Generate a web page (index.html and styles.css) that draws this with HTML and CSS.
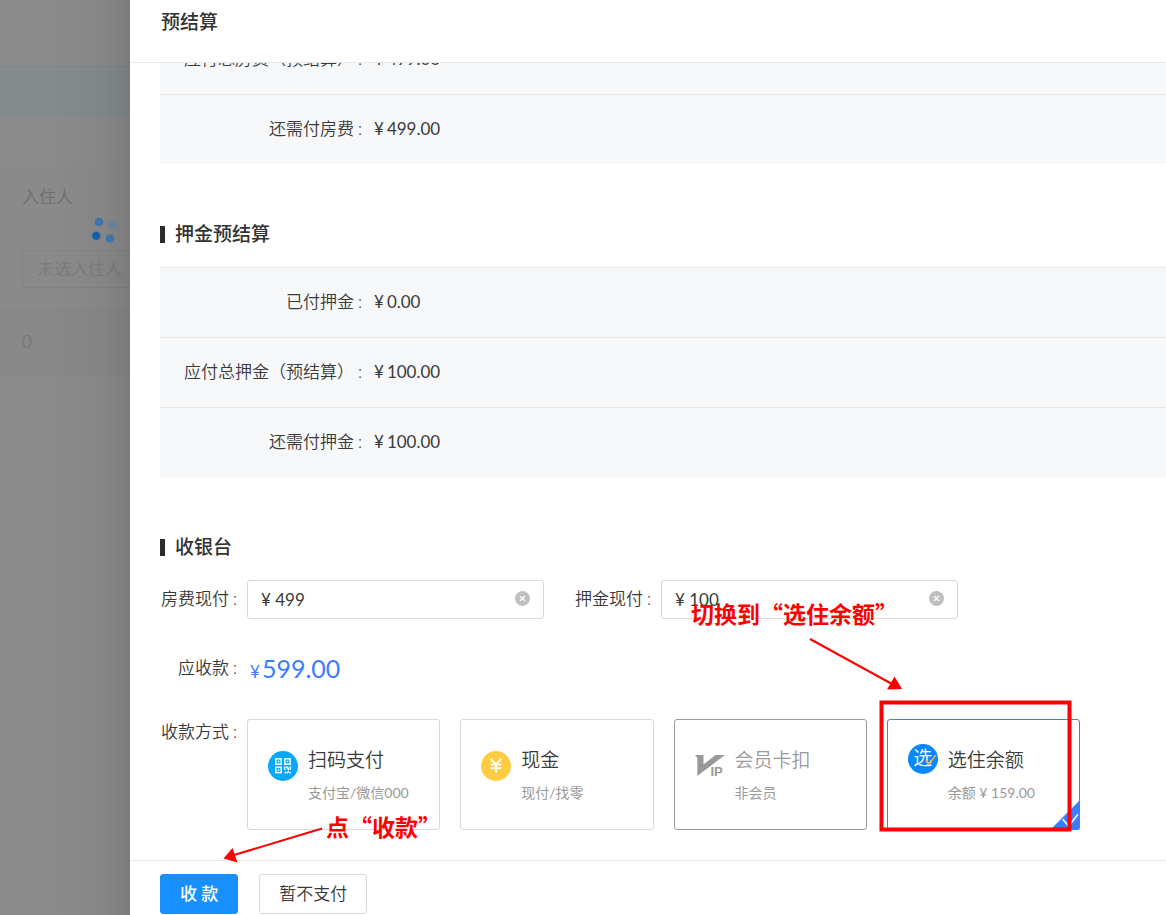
FILE: index.html
```html
<!DOCTYPE html>
<html lang="zh-CN">
<head>
<meta charset="utf-8">
<title>预结算</title>
<link rel="stylesheet" href="styles.css">
</head>
<body>
<div class="app">
  <aside class="backdrop">
    <div class="bg-top"></div>
    <div class="bg-alert"></div>
    <div class="bg-space"></div>
    <div class="bg-guest">
      <div class="bg-title">入住人</div>
      <div class="bg-field">未选入住人</div>
    </div>
    <div class="bg-total">0</div>
    <svg class="spinner" width="28" height="28" viewBox="0 0 28 28" aria-hidden="true">
      <circle cx="8" cy="7" r="4.3" fill="#3f73ab"/>
      <circle cx="21.7" cy="9.8" r="4.3" fill="#6681a0"/>
      <circle cx="5.2" cy="20.8" r="4.3" fill="#195fa8"/>
      <circle cx="19" cy="23.5" r="4.3" fill="#3f71a6"/>
    </svg>
  </aside>

  <main class="drawer">
    <header class="drawer-head"><h1>预结算</h1></header>

    <div class="drawer-body">
      <dl class="sheet">
        <div class="row"><dt>应付总房费（预结算）<i>:</i></dt><dd><i>¥</i>499.00</dd></div>
        <div class="row"><dt>还需付房费<i>:</i></dt><dd><i>¥</i>499.00</dd></div>
      </dl>

      <h2>押金预结算</h2>
      <dl class="sheet">
        <div class="row"><dt>已付押金<i>:</i></dt><dd><i>¥</i>0.00</dd></div>
        <div class="row"><dt>应付总押金（预结算）<i>:</i></dt><dd><i>¥</i>100.00</dd></div>
        <div class="row"><dt>还需付押金<i>:</i></dt><dd><i>¥</i>100.00</dd></div>
      </dl>

      <h2>收银台</h2>
      <form class="cashier" id="cashier">
        <div class="line">
          <label class="name" for="room">房费现付<i>:</i></label>
          <div class="field">
            <input id="room" type="text" value="¥ 499">
            <button type="button" class="clear" aria-label="清除房费">
              <svg width="15" height="15" viewBox="0 0 15 15"><circle cx="7.5" cy="7.5" r="7.5" fill="#bfbfbf"/><path d="M5 5l5 5M10 5l-5 5" stroke="#fff" stroke-width="1.2"/></svg>
            </button>
          </div>
          <label class="name second" for="deposit">押金现付<i>:</i></label>
          <div class="field">
            <input id="deposit" type="text" value="¥ 100">
            <button type="button" class="clear" aria-label="清除押金">
              <svg width="15" height="15" viewBox="0 0 15 15"><circle cx="7.5" cy="7.5" r="7.5" fill="#bfbfbf"/><path d="M5 5l5 5M10 5l-5 5" stroke="#fff" stroke-width="1.2"/></svg>
            </button>
          </div>
        </div>

        <div class="line due">
          <span class="name">应收款<i>:</i></span>
          <output class="sum"><small>¥</small>599.00</output>
        </div>

        <div class="line methods">
          <span class="name">收款方式<i>:</i></span>
          <div class="cards">
            <label class="card">
              <input type="radio" name="pay">
              <svg class="mark" width="30" height="30" viewBox="0 0 30 30" aria-hidden="true">
                <circle cx="15" cy="15" r="15" fill="#06a7fe"/>
                <g fill="none" stroke="#fff" stroke-width="1.5">
                  <rect x="7.8" y="7.8" width="5.4" height="5.4"/><rect x="16.8" y="7.8" width="5.4" height="5.4"/><rect x="7.8" y="16.2" width="5.4" height="5.4"/>
                  <path d="M16.8 15.500v3.500M16.500 21.500h2M18 16.300h1.500l1.200 3M22.300 15.500v3.200M19 22.300l1.800-2"/>
                </g>
                <path d="M9.8 9.8h1.5v1.5H9.8zM18.8 9.8h1.5v1.5h-1.5zM9.8 18.2h1.5v1.5H9.8zM21.5 21h1.5v1.5h-1.5z" fill="#fff"/>
              </svg>
              <span class="info"><b>扫码支付</b><em>支付宝/微信000</em></span>
            </label>
            <label class="card">
              <input type="radio" name="pay">
              <svg class="mark" width="30" height="30" viewBox="0 0 30 30" aria-hidden="true">
                <circle cx="15" cy="15" r="15" fill="#ffcb41"/>
                <path d="M9.8 8l5.2 5.3L20.2 8M9.5 13.6h11M9.5 17.2h11M15 13.3v8.5" fill="none" stroke="#fff" stroke-width="1.8"/>
              </svg>
              <span class="info"><b>现金</b><em>现付/找零</em></span>
            </label>
            <label class="card off">
              <input type="radio" name="pay" disabled>
              <svg class="mark" width="30" height="30" viewBox="0 0 30 30" aria-hidden="true">
                <path d="M0 4h8.500v9.500L20.500 4H30L2.300 25V6.700z" fill="#999"/>
                <text class="vip" x="15.500" y="25">IP</text>
              </svg>
              <span class="info"><b>会员卡扣</b><em>非会员</em></span>
            </label>
            <label class="card on">
              <input type="radio" name="pay" checked>
              <span class="mark badge">选<svg width="12" height="12" viewBox="0 0 12 12" aria-hidden="true"><path d="M1 6l3 4L11 1" fill="none" stroke="#e5b53d" stroke-width="1.6"/></svg></span>
              <span class="info"><b>选住余额</b><em>余额 ¥ 159.00</em></span>
              <svg class="corner" width="30" height="30" viewBox="0 0 30 30" aria-hidden="true"><path d="M30 0v27a3 3 0 0 1-3 3H0z" fill="#3d7bff"/><path d="M12.700 19.300l6 6.700L28 14.300" fill="none" stroke="#fff" stroke-width="1.500"/></svg>
            </label>
          </div>
        </div>
      </form>
    </div>

    <footer class="drawer-foot">
      <button class="btn primary" type="submit" form="cashier">收 款</button>
      <button class="btn" type="button">暂不支付</button>
    </footer>
  </main>

  <div class="notes">
    <svg class="arrows" width="1166" height="915" viewBox="0 0 1166 915" aria-hidden="true">
      <rect x="881.5" y="702.5" width="188" height="127" fill="none" stroke="#f00" stroke-width="4"/>
      <path d="M810 639L892 684M322 828.500L234 855" stroke="#f00" stroke-width="2" fill="none"/>
      <path d="M902 689L894.500 676.500L887 689.500zM223.500 858.500L232.500 848L237.500 862.500z" fill="#f00"/>
    </svg>
    <p class="note note-switch">切换到“选住余额”</p>
    <p class="note note-pay">点“收款”</p>
  </div>
</div>
</body>
</html>
```
FILE: styles.css
```css
* { box-sizing: border-box; }

body {
  margin: 0;
  font: 350 17px/26px Lato, "Noto Sans CJK SC", sans-serif;
  color: #3a3a3a;
  background: #fff;
}

h1, h2, dl, dd, p { margin: 0; }
i, em { font-style: normal; }
button, input { font: inherit; color: inherit; }

.app {
  position: relative;
  display: flex;
  height: 100vh;
  overflow: hidden;
}

/* Dimmed page behind the drawer */
.backdrop {
  position: relative;
  flex: 0 0 130px;
  overflow: hidden;
  white-space: nowrap;
  color: #6e6e6e;
  background: #8b8b8b;
}
.backdrop::after {
  content: "";
  position: absolute;
  inset: 0;
  background: linear-gradient(to right, rgba(0, 0, 0, 0) 40%, rgba(0, 0, 0, .04) 80%, rgba(0, 0, 0, .11));
}
.bg-top { height: 66px; }
.bg-alert {
  height: 50px;
  background: #848b8c;
  border: solid #7a898d;
  border-width: 1px 0;
}
.bg-space { height: 49px; }
.bg-guest {
  height: 143px;
  padding: 19px 0 0 22px;
  background: #8a8a8a;
}
.bg-field {
  height: 38px;
  margin-top: 40px;
  padding: 5px 14px;
  border: 1px solid #838383;
  border-right: 0;
  border-radius: 3px 0 0 3px;
  color: #7b7b7b;
}
.bg-total {
  height: 68px;
  padding: 21px 22px;
  background: #888;
}
.spinner {
  position: absolute;
  z-index: 1;
  left: 91px;
  top: 215px;
}

/* Drawer */
.drawer {
  flex: 1;
  min-width: 0;
  display: flex;
  flex-direction: column;
  background: #fff;
}
.drawer-head {
  flex: none;
  height: 63px;
  padding: 9px 31px;
  border-bottom: 1px solid #e8e8e8;
}
h1, h2 {
  font-size: 19px;
  font-weight: 500;
  line-height: 26px;
  color: #333;
}
.drawer-body {
  flex: 1;
  min-height: 0;
  display: flex;
  flex-direction: column;
  justify-content: flex-end;
  padding: 0 0 30px 30px;
  overflow: hidden;
}
.drawer-body > * { flex: none; }

.sheet { background: #f7f8fa; }
.row {
  display: flex;
  align-items: center;
  height: 70px;
  padding-bottom: 2px;
  border-top: 1px solid #e8e8e8;
}
dt {
  width: 203px;
  text-align: right;
}
dt i, .name i { margin: 0 1px 0 4px; }
dd {
  margin-left: 11px;
  font-weight: 400;
}
dd i { margin-right: 3px; }

h2 {
  display: flex;
  align-items: center;
  gap: 10px;
  margin: 57px 0 20px;
}
h2::before {
  content: "";
  width: 5px;
  height: 17px;
  background: #2b2b2b;
}

/* Cashier form */
.line { display: flex; }
.name {
  flex: none;
  width: 87px;
  padding-right: 9px;
  line-height: 38px;
  text-align: right;
}
.name.second {
  width: 117px;
}
.field {
  position: relative;
  flex: 0 1 297px;
}
.field input {
  width: 100%;
  height: 39px;
  padding: 0 40px 0 13px;
  border: 1px solid #d9d9d9;
  border-radius: 3px;
  background: #fff;
  font-weight: 400;
}
.clear {
  position: absolute;
  right: 14px;
  top: 11px;
  display: flex;
  padding: 0;
  border: 0;
  background: none;
}
.due { margin-top: 30px; }
.sum {
  padding-left: 3px;
  font-size: 25px;
  font-weight: 400;
  line-height: 38px;
  color: #3d7bff;
}
.sum small {
  margin-right: 2px;
  font-size: 17px;
}
.methods { margin-top: 28px; }
.methods .name { line-height: 26px; }
.cards {
  flex: 1;
  display: grid;
  grid-template-columns: repeat(4, 1fr);
  gap: 20px;
  margin-right: 86px;
}
.card {
  position: relative;
  display: flex;
  gap: 10px;
  height: 111px;
  padding: 27px 20px;
  border: 1px solid #d9d9d9;
  border-radius: 3px;
  white-space: nowrap;
}
.card input {
  position: absolute;
  opacity: 0;
}
.mark {
  flex: none;
  margin-top: 4px;
}
.info {
  display: flex;
  flex-direction: column;
  gap: 9px;
}
.info b {
  font-size: 19px;
  font-weight: 350;
}
.info em {
  font-size: 14px;
  font-weight: 400;
  line-height: 22px;
  color: #999;
}
.off { border-color: #999; }
.off .info b { color: #999; }
.vip {
  font: 700 13px "Liberation Sans", sans-serif;
  fill: #999;
}
.on { border-color: #3d7bff; }
.badge {
  position: relative;
  width: 30px;
  height: 30px;
  margin-top: -3px;
  border-radius: 50%;
  background: #0a86ff;
  color: #fff;
  font-size: 19px;
  line-height: 28px;
  text-align: center;
}
.badge svg {
  position: absolute;
  right: 1px;
  bottom: 8px;
}
.corner {
  position: absolute;
  right: -1px;
  bottom: -1px;
}

/* Footer */
.drawer-foot {
  flex: none;
  display: flex;
  gap: 21px;
  height: 55px;
  padding: 13px 30px 0;
  border-top: 1px solid #e8e8e8;
}
.btn {
  height: 40px;
  padding: 0 19px;
  border: 1px solid #d9d9d9;
  border-radius: 3px;
  background: #fff;
}
.primary {
  border-color: #1890ff;
  background: #1890ff;
  color: #fff;
  font-weight: 500;
}

/* Annotations drawn over the page */
.notes {
  position: absolute;
  inset: 0;
  pointer-events: none;
}
.arrows {
  position: absolute;
  left: 0;
  top: 0;
}
.note {
  position: absolute;
  font: 700 23px/30px "Noto Sans CJK SC", sans-serif;
  color: #f00;
  white-space: nowrap;
}
.note-switch { left: 691px; top: 598px; }
.note-pay { left: 326px; top: 811px; }
```
